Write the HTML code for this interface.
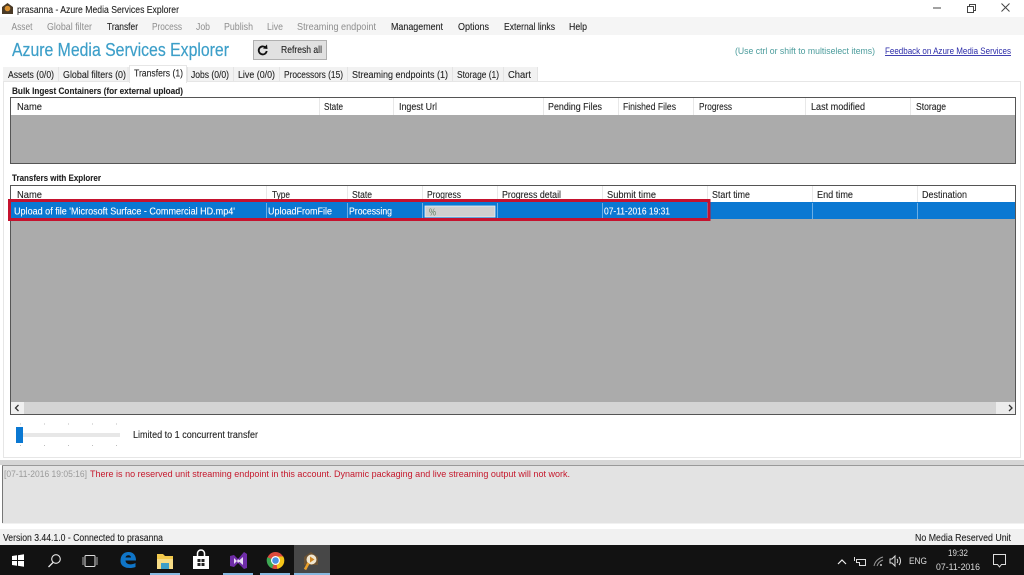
<!DOCTYPE html>
<html><head><meta charset="utf-8"><title>prasanna - Azure Media Services Explorer</title>
<style>
html,body{margin:0;padding:0;background:#fff;width:1024px;height:575px;overflow:hidden}
svg{display:block;position:absolute;left:0;top:0}
text{font-family:"Liberation Sans",sans-serif;font-size:10px;fill:#222;stroke:#222;stroke-width:.1px}
text.d{fill:#8e8e8e;stroke:none}text.w{fill:#fff;stroke:#fff}text.t{fill:#dcdcdc;stroke:none}
</style></head><body>
<svg width="1024" height="575" viewBox="0 0 1024 575" xmlns="http://www.w3.org/2000/svg">
<rect width="1024" height="575" fill="#fff"/>
<!-- title -->
<path d="M2 7l5.500-4 5.500 4v7h-11z" fill="#4a3a26"/><circle cx="7.500" cy="8.500" r="2.800" fill="#d9902f"/>
<text x="17" y="13" textLength="162" lengthAdjust="spacingAndGlyphs">prasanna - Azure Media Services Explorer</text>
<path d="M933 8h8" stroke="#444" fill="none"/>
<path d="M967.500 6.500h6v6h-6zM969.500 6.500v-2h6v6h-2" stroke="#444" fill="none"/>
<path d="M1001.500 3.500l8 8M1009.500 3.500l-8 8" stroke="#444" fill="none"/>
<!-- menu -->
<rect y="17" width="1024" height="18" fill="#f5f5f5"/>
<g>
<text class="d" x="11.500" y="30" textLength="21" lengthAdjust="spacingAndGlyphs">Asset</text>
<text class="d" x="47" y="30" textLength="45" lengthAdjust="spacingAndGlyphs">Global filter</text>
<text x="107" y="30" textLength="31" lengthAdjust="spacingAndGlyphs">Transfer</text>
<text class="d" x="152" y="30" textLength="30" lengthAdjust="spacingAndGlyphs">Process</text>
<text class="d" x="196" y="30" textLength="14" lengthAdjust="spacingAndGlyphs">Job</text>
<text class="d" x="224" y="30" textLength="29" lengthAdjust="spacingAndGlyphs">Publish</text>
<text class="d" x="267" y="30" textLength="16" lengthAdjust="spacingAndGlyphs">Live</text>
<text class="d" x="297" y="30" textLength="79" lengthAdjust="spacingAndGlyphs">Streaming endpoint</text>
<text x="391" y="30" textLength="52" lengthAdjust="spacingAndGlyphs">Management</text>
<text x="458" y="30" textLength="31" lengthAdjust="spacingAndGlyphs">Options</text>
<text x="504" y="30" textLength="51" lengthAdjust="spacingAndGlyphs">External links</text>
<text x="569" y="30" textLength="18" lengthAdjust="spacingAndGlyphs">Help</text>
</g>
<!-- heading -->
<text x="12" y="56" textLength="217" lengthAdjust="spacingAndGlyphs" style="font-size:18px;fill:#3d9fc9;stroke:#3d9fc9;stroke-width:.2px">Azure Media Services Explorer</text>
<rect x="253.500" y="40.500" width="73" height="19" fill="#e1e1e1" stroke="#b0b0b0"/>
<path d="M265.500 47.500a4 4 0 1 0 1.200 3.500" fill="none" stroke="#111" stroke-width="1.800"/>
<path d="M263 48.500l4.500 0.500-0.500-4.500z" fill="#111"/>
<text x="281" y="53" textLength="41" lengthAdjust="spacingAndGlyphs">Refresh all</text>
<text x="735" y="54" textLength="140" lengthAdjust="spacingAndGlyphs" style="font-size:9px;fill:#4b9c9c;stroke:none">(Use ctrl or shift to multiselect items)</text>
<text x="885" y="54" textLength="126" lengthAdjust="spacingAndGlyphs" text-decoration="underline" style="font-size:9px;fill:#2b2ba8;stroke:none">Feedback on Azure Media Services</text>
<!-- tabs -->
<rect x="3" y="67" width="535" height="15" fill="#f2f2f2"/>
<path d="M58.500 67v15M128 67v15M187.500 67v15M233.500 67v15M279.500 67v15M347.500 67v15M452.500 67v15M503.500 67v15M537.500 67v15" stroke="#e4e4e4"/>
<rect x="3.500" y="81.500" width="1017" height="376" fill="#fff" stroke="#e6e6e6"/>
<rect x="129.500" y="65.500" width="57" height="17" fill="#fff" stroke="#e6e6e6"/>
<rect x="130" y="80" width="56" height="3" fill="#fff"/>
<text x="8" y="78" textLength="46" lengthAdjust="spacingAndGlyphs">Assets (0/0)</text>
<text x="63" y="78" textLength="63" lengthAdjust="spacingAndGlyphs">Global filters (0)</text>
<text x="134" y="76.500" textLength="49" lengthAdjust="spacingAndGlyphs">Transfers (1)</text>
<text x="191" y="78" textLength="38" lengthAdjust="spacingAndGlyphs">Jobs (0/0)</text>
<text x="238" y="78" textLength="37" lengthAdjust="spacingAndGlyphs">Live (0/0)</text>
<text x="284" y="78" textLength="59" lengthAdjust="spacingAndGlyphs">Processors (15)</text>
<text x="352" y="78" textLength="96" lengthAdjust="spacingAndGlyphs">Streaming endpoints (1)</text>
<text x="457" y="78" textLength="42" lengthAdjust="spacingAndGlyphs">Storage (1)</text>
<text x="508" y="78" textLength="23" lengthAdjust="spacingAndGlyphs">Chart</text>
<!-- bulk -->
<text x="12" y="94" textLength="171" lengthAdjust="spacingAndGlyphs" style="font-weight:bold;font-size:9.500px">Bulk Ingest Containers (for external upload)</text>
<rect x="10.500" y="97.500" width="1005" height="66" fill="#ababab" stroke="#555"/>
<rect x="11" y="98" width="1004" height="17" fill="#fff"/>
<path d="M319.500 98v17M393.500 98v17M543.500 98v17M618.500 98v17M693.500 98v17M805.500 98v17M910.500 98v17" stroke="#e8e8e8"/>
<text x="17" y="110" textLength="25" lengthAdjust="spacingAndGlyphs">Name</text>
<text x="324" y="110" textLength="19" lengthAdjust="spacingAndGlyphs">State</text>
<text x="399" y="110" textLength="38" lengthAdjust="spacingAndGlyphs">Ingest Url</text>
<text x="548" y="110" textLength="54" lengthAdjust="spacingAndGlyphs">Pending Files</text>
<text x="623" y="110" textLength="53" lengthAdjust="spacingAndGlyphs">Finished Files</text>
<text x="699" y="110" textLength="33" lengthAdjust="spacingAndGlyphs">Progress</text>
<text x="811" y="110" textLength="54" lengthAdjust="spacingAndGlyphs">Last modified</text>
<text x="916" y="110" textLength="30" lengthAdjust="spacingAndGlyphs">Storage</text>
<!-- transfers -->
<text x="12" y="181" textLength="89" lengthAdjust="spacingAndGlyphs" style="font-weight:bold;font-size:9.500px">Transfers with Explorer</text>
<rect x="10.500" y="185.500" width="1005" height="229" fill="#ababab" stroke="#555"/>
<rect x="11" y="186" width="1004" height="16" fill="#fff"/>
<path d="M266.500 186v16M347.500 186v16M422.500 186v16M497.500 186v16M602.500 186v16M707.500 186v16M812.500 186v16M917.500 186v16" stroke="#e8e8e8"/>
<text x="17" y="198" textLength="25" lengthAdjust="spacingAndGlyphs">Name</text>
<text x="272" y="198" textLength="18" lengthAdjust="spacingAndGlyphs">Type</text>
<text x="352" y="198" textLength="20" lengthAdjust="spacingAndGlyphs">State</text>
<text x="427" y="198" textLength="34" lengthAdjust="spacingAndGlyphs">Progress</text>
<text x="502" y="198" textLength="59" lengthAdjust="spacingAndGlyphs">Progress detail</text>
<text x="607" y="198" textLength="49" lengthAdjust="spacingAndGlyphs">Submit time</text>
<text x="712" y="198" textLength="38" lengthAdjust="spacingAndGlyphs">Start time</text>
<text x="817" y="198" textLength="36" lengthAdjust="spacingAndGlyphs">End time</text>
<text x="922" y="198" textLength="45" lengthAdjust="spacingAndGlyphs">Destination</text>
<!-- row -->
<rect x="11" y="202" width="1004" height="17" fill="#0a78d2"/>
<path d="M266.500 203v16M347.500 203v16M422.500 203v16M497.500 203v16M602.500 203v16M707.500 203v16M812.500 203v16M917.500 203v16" stroke="#6aaee6"/>
<text class="w" x="14" y="214.500" textLength="221" lengthAdjust="spacingAndGlyphs">Upload of file 'Microsoft Surface - Commercial HD.mp4'</text>
<text class="w" x="268" y="214.500" textLength="64" lengthAdjust="spacingAndGlyphs">UploadFromFile</text>
<text class="w" x="349" y="214.500" textLength="43" lengthAdjust="spacingAndGlyphs">Processing</text>
<rect x="425" y="206" width="70" height="11" fill="#cfcfcf" stroke="#e8f0f6" stroke-width="0.800"/>
<text x="429" y="215.500" textLength="7" lengthAdjust="spacingAndGlyphs" style="fill:#5f7f5f;stroke:none">%</text>
<text class="w" x="604" y="214.500" textLength="66" lengthAdjust="spacingAndGlyphs">07-11-2016 19:31</text>
<rect x="9.500" y="200.500" width="699.500" height="19" fill="none" stroke="#c5122e" stroke-width="3"/>
<!-- scrollbar -->
<rect x="11" y="402" width="1004" height="12" fill="#d4d4d4"/>
<rect x="11" y="402" width="13" height="12" fill="#f0f0f0"/>
<rect x="996" y="402" width="19" height="12" fill="#ececec"/>
<path d="M18.500 405l-3 3 3 3M1009 405l3 3-3 3" fill="none" stroke="#333" stroke-width="1.300"/>
<rect x="10" y="414" width="1006" height="1" fill="#555"/>
<!-- slider -->
<rect x="16" y="433" width="104" height="4" fill="#e7e7e7"/>
<rect x="16" y="427" width="7" height="16" fill="#0a78d2"/>
<path d="M20 424h1M44 424h1M68 424h1M92 424h1M116 424h1M20 445.500h1M44 445.500h1M68 445.500h1M92 445.500h1M116 445.500h1" stroke="#bdbdbd"/>
<text x="133" y="438" textLength="125" lengthAdjust="spacingAndGlyphs">Limited to 1 concurrent transfer</text>
<!-- log -->
<rect y="460" width="1024" height="5" fill="#d6d6d6"/>
<rect x="2" y="465" width="1022" height="58.500" fill="#e3e3e3"/>
<path d="M2.500 466v57" stroke="#777"/><path d="M2 465.500h1022" stroke="#999"/>
<text x="4" y="477" textLength="83" lengthAdjust="spacingAndGlyphs" style="fill:#9a9a9a;stroke:none;font-size:9.500px">[07-11-2016 19:05:16]</text>
<text x="90" y="477" textLength="480" lengthAdjust="spacingAndGlyphs" style="fill:#c5182c;stroke:none;font-size:9.500px">There is no reserved unit streaming endpoint in this account. Dynamic packaging and live streaming output will not work.</text>
<!-- status -->
<rect y="529" width="1024" height="16" fill="#f1f1f1"/>
<text x="3" y="541" textLength="160" lengthAdjust="spacingAndGlyphs">Version 3.44.1.0 - Connected to prasanna</text>
<text x="915" y="541" textLength="96" lengthAdjust="spacingAndGlyphs">No Media Reserved Unit</text>
<!-- taskbar -->
<rect y="545" width="1024" height="30" fill="#121212"/>
<rect x="294" y="545" width="36" height="30" fill="#474747"/>
<path d="M12 556l5-.7v4.700h-5zM18 555.200l6-.9v5.700h-6zM12 561h5v4.700l-5-.7zM18 561h6v5.700l-6-.9z" fill="#fff"/>
<circle cx="56" cy="559" r="4.300" fill="none" stroke="#e8e8e8" stroke-width="1.100"/><path d="M53 562.500l-4.500 4.500" stroke="#e8e8e8" stroke-width="1.300"/>
<rect x="85" y="555.500" width="10" height="11" rx="1" fill="none" stroke="#ddd"/><path d="M83 557v8M97 557v8" stroke="#aaa"/>
<path d="M120.500 561c0-6 3.500-9 8-9 5 0 7.500 3.500 7.500 8.500h-10.500c0 4 5.500 5 10 2.500v4c-7 2.500-15 .5-15-6zM125.500 557.500h5.500c0-3-5-3-5.500 0z" fill="#0f75c8"/>
<path d="M157 554h6l2 2h8v13h-16z" fill="#f2c94c"/><rect x="157" y="559" width="16" height="10" fill="#f7dc86"/><rect x="161" y="563" width="8" height="6" fill="#3d9fc9"/>
<path d="M193 556h16v13h-16z" fill="#fff"/><path d="M197.500 556v-2.500a3.500 3.500 0 0 1 7 0v2.500" fill="none" stroke="#fff" stroke-width="1.500"/><rect x="197.500" y="559" width="3" height="3" fill="#222"/><rect x="201.500" y="559" width="3" height="3" fill="#222"/><rect x="197.500" y="563" width="3" height="3" fill="#222"/><rect x="201.500" y="563" width="3" height="3" fill="#222"/>
<path d="M230 556l4-1 4 4 6-7 3 2v14l-3 1-6-6-4 4-4-1z" fill="#6f2da8"/><path d="M234 558v6l3-3zM243 557l-4.500 4 4.500 4zM238 559l-1 2 1 2 2-2z" fill="#e9dcf5"/>
<circle cx="275.500" cy="560.500" r="8.500" fill="#dd4b3e"/><path d="M275.500 560.500l-3.500 7.800a8.500 8.500 0 0 1-4.700-11z" fill="#3da954"/><path d="M275.500 556.500h7.800a8.500 8.500 0 0 1-6 12.400z" fill="#f5c518"/><circle cx="275.500" cy="560.500" r="3.900" fill="#4a90e2" stroke="#fff" stroke-width="1.200"/>
<path d="M304 557l7-5 7 5v8h-14z" fill="#6b5233"/><circle cx="311.500" cy="559.500" r="5" fill="#f0e6d0"/><path d="M310 556.500l4.500 3-4.500 3z" fill="#d08520"/><path d="M308.500 563l-3.500 6.500" stroke="#e8a02c" stroke-width="2.600"/>
<path d="M150 574h30M223 574h30M260 574h30M294 574h36" stroke="#86b8df" stroke-width="2"/>
<!-- tray -->
<path d="M838 564l4-4 4 4" fill="none" stroke="#eee" stroke-width="1.200"/>
<path d="M856.500 559.500h9v6h-6v-3h-3zM854.500 557v4" fill="none" stroke="#ddd"/>
<path d="M874 566c1-5 5-8 9-9M877 566c1-3 3-5 6-6" fill="none" stroke="#999"/><circle cx="881" cy="565" r="1" fill="#ccc"/>
<path d="M890 559h2l3-3v10l-3-3h-2zM897 559c1 1 1 3 0 4M899 557c2 2 2 6 0 8" fill="none" stroke="#ddd"/>
<text class="t" x="909" y="564" textLength="18" lengthAdjust="spacingAndGlyphs" style="font-size:9.500px">ENG</text>
<text class="t" x="948" y="556" textLength="20" lengthAdjust="spacingAndGlyphs" style="font-size:9.500px">19:32</text>
<text class="t" x="936" y="570" textLength="44" lengthAdjust="spacingAndGlyphs" style="font-size:9.500px">07-11-2016</text>
<path d="M993.500 554.500h12v10h-4l-2 2.500-2-2.500h-4z" fill="none" stroke="#ddd"/>
</svg>
</body></html>
